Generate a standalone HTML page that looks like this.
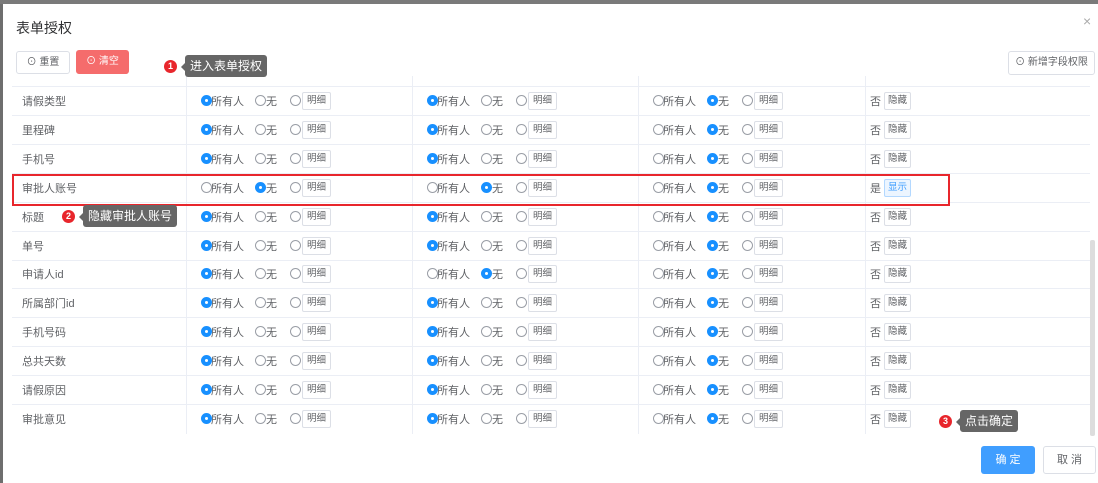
<!DOCTYPE html><html><head><meta charset="utf-8"><style>
*{box-sizing:border-box;margin:0;padding:0}
body{width:1098px;height:483px;overflow:hidden;background:#6e6e6e;font-family:"Liberation Sans","Noto Sans CJK SC",sans-serif;font-size:11px;color:#606266;position:relative}
.modal{position:absolute;left:3px;top:4px;width:1095px;height:479px;background:#fff}
.a{position:absolute}
.row{position:absolute;left:12px;width:1078px;height:29px;border-bottom:1px solid #ebeef5}
.vl{position:absolute;top:0;bottom:0;width:1px;background:#ebeef5}
.lab{position:absolute;left:10px;top:9px;font-size:11px;line-height:13px;color:#606266}
.g{position:absolute;top:0;height:29px;width:226px}
.r{position:absolute;top:8px;width:11px;height:11px;border:1px solid #9a9ea6;border-radius:50%;background:#fff}
.r.on{border-color:#1890ff;background:#1890ff}
.r.on:after{content:"";position:absolute;left:3px;top:3px;width:3px;height:3px;border-radius:50%;background:#fff}
.t{position:absolute;top:9px;font-size:11px;line-height:13px;color:#606266}
.b{position:absolute;top:5px;height:18px;border:1px solid #dcdfe6;border-radius:2px;font-size:9.5px;color:#606266;line-height:16px;text-align:center;background:#fff}
.tip{position:absolute;background:#666;color:#fff;font-size:12px;border-radius:3px;line-height:22px;padding:0 5px}
.tip:before{content:"";position:absolute;left:-4px;top:8px;border:4px solid transparent;border-left:0;border-right-color:#666}
.dot{position:absolute;width:13px;height:13px;border-radius:50%;background:#e8262c;color:#fff;font-size:9px;text-align:center;line-height:13px;font-weight:bold}
</style></head><body>
<div class="a" style="left:0;top:0;width:1098px;height:4px;background:#7a7a7a"></div>
<div class="modal">
<div class="a" style="left:13px;top:15px;font-size:14px;line-height:18px;color:#303133">表单授权</div>
<div class="a" style="left:1080px;top:9px;font-size:14px;color:#aaa">×</div>
<div class="a" style="left:13px;top:47px;width:54px;height:23px;border:1px solid #dcdfe6;border-radius:3px;font-size:10px;line-height:21px;text-align:center;color:#606266">⊙ 重置</div>
<div class="a" style="left:73px;top:46px;width:53px;height:24px;background:#f56c6c;border-radius:3px;font-size:10px;line-height:24px;text-align:center;color:#fff">⊙ 清空</div>
<div class="a" style="left:1005px;top:47px;width:87px;height:24px;border:1px solid #dcdfe6;border-radius:3px;font-size:10px;line-height:22px;text-align:center;color:#606266">⊙ 新增字段权限</div>
<div class="a" style="left:9px;top:72px;width:1078px;height:11px;border-bottom:1px solid #ebeef5"><div class="vl" style="left:174px"></div><div class="vl" style="left:400px"></div><div class="vl" style="left:626px"></div><div class="vl" style="left:853px"></div></div>
<div class="a" style="left:1087px;top:236px;width:5px;height:196px;background:#ddd;border-radius:2px"></div>
<div class="a" style="left:978px;top:442px;width:54px;height:28px;background:#409eff;border-radius:3px;color:#fff;font-size:11px;line-height:28px;text-align:center">确 定</div>
<div class="a" style="left:1040px;top:442px;width:53px;height:28px;border:1px solid #dcdfe6;border-radius:3px;color:#606266;font-size:11px;line-height:26px;text-align:center">取 消</div>
</div>
<div style="position:absolute;left:0;top:4px">
<div class="row" style="top:83px"><div class="vl" style="left:174px"></div><div class="vl" style="left:400px"></div><div class="vl" style="left:626px"></div><div class="vl" style="left:853px"></div><div class="lab">请假类型</div>
<div class="g" style="left:174px"><span class="r on" style="left:15px"></span><span class="t" style="left:25px">所有人</span><span class="r" style="left:69px"></span><span class="t" style="left:80px">无</span><span class="r" style="left:104px"></span><span class="b" style="left:116px;width:29px">明细</span></div>
<div class="g" style="left:400px"><span class="r on" style="left:15px"></span><span class="t" style="left:25px">所有人</span><span class="r" style="left:69px"></span><span class="t" style="left:80px">无</span><span class="r" style="left:104px"></span><span class="b" style="left:116px;width:29px">明细</span></div>
<div class="g" style="left:626px"><span class="r" style="left:15px"></span><span class="t" style="left:25px">所有人</span><span class="r on" style="left:69px"></span><span class="t" style="left:80px">无</span><span class="r" style="left:104px"></span><span class="b" style="left:116px;width:29px">明细</span></div>
<div class="g" style="left:853px"><span class="t" style="left:5px">否</span><span class="b" style="left:19px;width:27px">隐藏</span></div></div>
<div class="row" style="top:112px"><div class="vl" style="left:174px"></div><div class="vl" style="left:400px"></div><div class="vl" style="left:626px"></div><div class="vl" style="left:853px"></div><div class="lab">里程碑</div>
<div class="g" style="left:174px"><span class="r on" style="left:15px"></span><span class="t" style="left:25px">所有人</span><span class="r" style="left:69px"></span><span class="t" style="left:80px">无</span><span class="r" style="left:104px"></span><span class="b" style="left:116px;width:29px">明细</span></div>
<div class="g" style="left:400px"><span class="r on" style="left:15px"></span><span class="t" style="left:25px">所有人</span><span class="r" style="left:69px"></span><span class="t" style="left:80px">无</span><span class="r" style="left:104px"></span><span class="b" style="left:116px;width:29px">明细</span></div>
<div class="g" style="left:626px"><span class="r" style="left:15px"></span><span class="t" style="left:25px">所有人</span><span class="r on" style="left:69px"></span><span class="t" style="left:80px">无</span><span class="r" style="left:104px"></span><span class="b" style="left:116px;width:29px">明细</span></div>
<div class="g" style="left:853px"><span class="t" style="left:5px">否</span><span class="b" style="left:19px;width:27px">隐藏</span></div></div>
<div class="row" style="top:141px"><div class="vl" style="left:174px"></div><div class="vl" style="left:400px"></div><div class="vl" style="left:626px"></div><div class="vl" style="left:853px"></div><div class="lab">手机号</div>
<div class="g" style="left:174px"><span class="r on" style="left:15px"></span><span class="t" style="left:25px">所有人</span><span class="r" style="left:69px"></span><span class="t" style="left:80px">无</span><span class="r" style="left:104px"></span><span class="b" style="left:116px;width:29px">明细</span></div>
<div class="g" style="left:400px"><span class="r on" style="left:15px"></span><span class="t" style="left:25px">所有人</span><span class="r" style="left:69px"></span><span class="t" style="left:80px">无</span><span class="r" style="left:104px"></span><span class="b" style="left:116px;width:29px">明细</span></div>
<div class="g" style="left:626px"><span class="r" style="left:15px"></span><span class="t" style="left:25px">所有人</span><span class="r on" style="left:69px"></span><span class="t" style="left:80px">无</span><span class="r" style="left:104px"></span><span class="b" style="left:116px;width:29px">明细</span></div>
<div class="g" style="left:853px"><span class="t" style="left:5px">否</span><span class="b" style="left:19px;width:27px">隐藏</span></div></div>
<div class="row" style="top:170px"><div class="vl" style="left:174px"></div><div class="vl" style="left:400px"></div><div class="vl" style="left:626px"></div><div class="vl" style="left:853px"></div><div class="lab">审批人账号</div>
<div class="g" style="left:174px"><span class="r" style="left:15px"></span><span class="t" style="left:25px">所有人</span><span class="r on" style="left:69px"></span><span class="t" style="left:80px">无</span><span class="r" style="left:104px"></span><span class="b" style="left:116px;width:29px">明细</span></div>
<div class="g" style="left:400px"><span class="r" style="left:15px"></span><span class="t" style="left:25px">所有人</span><span class="r on" style="left:69px"></span><span class="t" style="left:80px">无</span><span class="r" style="left:104px"></span><span class="b" style="left:116px;width:29px">明细</span></div>
<div class="g" style="left:626px"><span class="r" style="left:15px"></span><span class="t" style="left:25px">所有人</span><span class="r on" style="left:69px"></span><span class="t" style="left:80px">无</span><span class="r" style="left:104px"></span><span class="b" style="left:116px;width:29px">明细</span></div>
<div class="g" style="left:853px"><span class="t" style="left:5px">是</span><span class="b" style="left:19px;width:27px;background:#ecf5ff;border-color:#b3d8ff;color:#409eff">显示</span></div></div>
<div class="row" style="top:199px"><div class="vl" style="left:174px"></div><div class="vl" style="left:400px"></div><div class="vl" style="left:626px"></div><div class="vl" style="left:853px"></div><div class="lab">标题</div>
<div class="g" style="left:174px"><span class="r on" style="left:15px"></span><span class="t" style="left:25px">所有人</span><span class="r" style="left:69px"></span><span class="t" style="left:80px">无</span><span class="r" style="left:104px"></span><span class="b" style="left:116px;width:29px">明细</span></div>
<div class="g" style="left:400px"><span class="r on" style="left:15px"></span><span class="t" style="left:25px">所有人</span><span class="r" style="left:69px"></span><span class="t" style="left:80px">无</span><span class="r" style="left:104px"></span><span class="b" style="left:116px;width:29px">明细</span></div>
<div class="g" style="left:626px"><span class="r" style="left:15px"></span><span class="t" style="left:25px">所有人</span><span class="r on" style="left:69px"></span><span class="t" style="left:80px">无</span><span class="r" style="left:104px"></span><span class="b" style="left:116px;width:29px">明细</span></div>
<div class="g" style="left:853px"><span class="t" style="left:5px">否</span><span class="b" style="left:19px;width:27px">隐藏</span></div></div>
<div class="row" style="top:228px"><div class="vl" style="left:174px"></div><div class="vl" style="left:400px"></div><div class="vl" style="left:626px"></div><div class="vl" style="left:853px"></div><div class="lab">单号</div>
<div class="g" style="left:174px"><span class="r on" style="left:15px"></span><span class="t" style="left:25px">所有人</span><span class="r" style="left:69px"></span><span class="t" style="left:80px">无</span><span class="r" style="left:104px"></span><span class="b" style="left:116px;width:29px">明细</span></div>
<div class="g" style="left:400px"><span class="r on" style="left:15px"></span><span class="t" style="left:25px">所有人</span><span class="r" style="left:69px"></span><span class="t" style="left:80px">无</span><span class="r" style="left:104px"></span><span class="b" style="left:116px;width:29px">明细</span></div>
<div class="g" style="left:626px"><span class="r" style="left:15px"></span><span class="t" style="left:25px">所有人</span><span class="r on" style="left:69px"></span><span class="t" style="left:80px">无</span><span class="r" style="left:104px"></span><span class="b" style="left:116px;width:29px">明细</span></div>
<div class="g" style="left:853px"><span class="t" style="left:5px">否</span><span class="b" style="left:19px;width:27px">隐藏</span></div></div>
<div class="row" style="top:256px"><div class="vl" style="left:174px"></div><div class="vl" style="left:400px"></div><div class="vl" style="left:626px"></div><div class="vl" style="left:853px"></div><div class="lab">申请人id</div>
<div class="g" style="left:174px"><span class="r on" style="left:15px"></span><span class="t" style="left:25px">所有人</span><span class="r" style="left:69px"></span><span class="t" style="left:80px">无</span><span class="r" style="left:104px"></span><span class="b" style="left:116px;width:29px">明细</span></div>
<div class="g" style="left:400px"><span class="r" style="left:15px"></span><span class="t" style="left:25px">所有人</span><span class="r on" style="left:69px"></span><span class="t" style="left:80px">无</span><span class="r" style="left:104px"></span><span class="b" style="left:116px;width:29px">明细</span></div>
<div class="g" style="left:626px"><span class="r" style="left:15px"></span><span class="t" style="left:25px">所有人</span><span class="r on" style="left:69px"></span><span class="t" style="left:80px">无</span><span class="r" style="left:104px"></span><span class="b" style="left:116px;width:29px">明细</span></div>
<div class="g" style="left:853px"><span class="t" style="left:5px">否</span><span class="b" style="left:19px;width:27px">隐藏</span></div></div>
<div class="row" style="top:285px"><div class="vl" style="left:174px"></div><div class="vl" style="left:400px"></div><div class="vl" style="left:626px"></div><div class="vl" style="left:853px"></div><div class="lab">所属部门id</div>
<div class="g" style="left:174px"><span class="r on" style="left:15px"></span><span class="t" style="left:25px">所有人</span><span class="r" style="left:69px"></span><span class="t" style="left:80px">无</span><span class="r" style="left:104px"></span><span class="b" style="left:116px;width:29px">明细</span></div>
<div class="g" style="left:400px"><span class="r on" style="left:15px"></span><span class="t" style="left:25px">所有人</span><span class="r" style="left:69px"></span><span class="t" style="left:80px">无</span><span class="r" style="left:104px"></span><span class="b" style="left:116px;width:29px">明细</span></div>
<div class="g" style="left:626px"><span class="r" style="left:15px"></span><span class="t" style="left:25px">所有人</span><span class="r on" style="left:69px"></span><span class="t" style="left:80px">无</span><span class="r" style="left:104px"></span><span class="b" style="left:116px;width:29px">明细</span></div>
<div class="g" style="left:853px"><span class="t" style="left:5px">否</span><span class="b" style="left:19px;width:27px">隐藏</span></div></div>
<div class="row" style="top:314px"><div class="vl" style="left:174px"></div><div class="vl" style="left:400px"></div><div class="vl" style="left:626px"></div><div class="vl" style="left:853px"></div><div class="lab">手机号码</div>
<div class="g" style="left:174px"><span class="r on" style="left:15px"></span><span class="t" style="left:25px">所有人</span><span class="r" style="left:69px"></span><span class="t" style="left:80px">无</span><span class="r" style="left:104px"></span><span class="b" style="left:116px;width:29px">明细</span></div>
<div class="g" style="left:400px"><span class="r on" style="left:15px"></span><span class="t" style="left:25px">所有人</span><span class="r" style="left:69px"></span><span class="t" style="left:80px">无</span><span class="r" style="left:104px"></span><span class="b" style="left:116px;width:29px">明细</span></div>
<div class="g" style="left:626px"><span class="r" style="left:15px"></span><span class="t" style="left:25px">所有人</span><span class="r on" style="left:69px"></span><span class="t" style="left:80px">无</span><span class="r" style="left:104px"></span><span class="b" style="left:116px;width:29px">明细</span></div>
<div class="g" style="left:853px"><span class="t" style="left:5px">否</span><span class="b" style="left:19px;width:27px">隐藏</span></div></div>
<div class="row" style="top:343px"><div class="vl" style="left:174px"></div><div class="vl" style="left:400px"></div><div class="vl" style="left:626px"></div><div class="vl" style="left:853px"></div><div class="lab">总共天数</div>
<div class="g" style="left:174px"><span class="r on" style="left:15px"></span><span class="t" style="left:25px">所有人</span><span class="r" style="left:69px"></span><span class="t" style="left:80px">无</span><span class="r" style="left:104px"></span><span class="b" style="left:116px;width:29px">明细</span></div>
<div class="g" style="left:400px"><span class="r on" style="left:15px"></span><span class="t" style="left:25px">所有人</span><span class="r" style="left:69px"></span><span class="t" style="left:80px">无</span><span class="r" style="left:104px"></span><span class="b" style="left:116px;width:29px">明细</span></div>
<div class="g" style="left:626px"><span class="r" style="left:15px"></span><span class="t" style="left:25px">所有人</span><span class="r on" style="left:69px"></span><span class="t" style="left:80px">无</span><span class="r" style="left:104px"></span><span class="b" style="left:116px;width:29px">明细</span></div>
<div class="g" style="left:853px"><span class="t" style="left:5px">否</span><span class="b" style="left:19px;width:27px">隐藏</span></div></div>
<div class="row" style="top:372px"><div class="vl" style="left:174px"></div><div class="vl" style="left:400px"></div><div class="vl" style="left:626px"></div><div class="vl" style="left:853px"></div><div class="lab">请假原因</div>
<div class="g" style="left:174px"><span class="r on" style="left:15px"></span><span class="t" style="left:25px">所有人</span><span class="r" style="left:69px"></span><span class="t" style="left:80px">无</span><span class="r" style="left:104px"></span><span class="b" style="left:116px;width:29px">明细</span></div>
<div class="g" style="left:400px"><span class="r on" style="left:15px"></span><span class="t" style="left:25px">所有人</span><span class="r" style="left:69px"></span><span class="t" style="left:80px">无</span><span class="r" style="left:104px"></span><span class="b" style="left:116px;width:29px">明细</span></div>
<div class="g" style="left:626px"><span class="r" style="left:15px"></span><span class="t" style="left:25px">所有人</span><span class="r on" style="left:69px"></span><span class="t" style="left:80px">无</span><span class="r" style="left:104px"></span><span class="b" style="left:116px;width:29px">明细</span></div>
<div class="g" style="left:853px"><span class="t" style="left:5px">否</span><span class="b" style="left:19px;width:27px">隐藏</span></div></div>
<div class="row" style="top:401px;border-bottom:0"><div class="vl" style="left:174px"></div><div class="vl" style="left:400px"></div><div class="vl" style="left:626px"></div><div class="vl" style="left:853px"></div><div class="lab">审批意见</div>
<div class="g" style="left:174px"><span class="r on" style="left:15px"></span><span class="t" style="left:25px">所有人</span><span class="r" style="left:69px"></span><span class="t" style="left:80px">无</span><span class="r" style="left:104px"></span><span class="b" style="left:116px;width:29px">明细</span></div>
<div class="g" style="left:400px"><span class="r on" style="left:15px"></span><span class="t" style="left:25px">所有人</span><span class="r" style="left:69px"></span><span class="t" style="left:80px">无</span><span class="r" style="left:104px"></span><span class="b" style="left:116px;width:29px">明细</span></div>
<div class="g" style="left:626px"><span class="r" style="left:15px"></span><span class="t" style="left:25px">所有人</span><span class="r on" style="left:69px"></span><span class="t" style="left:80px">无</span><span class="r" style="left:104px"></span><span class="b" style="left:116px;width:29px">明细</span></div>
<div class="g" style="left:853px"><span class="t" style="left:5px">否</span><span class="b" style="left:19px;width:27px">隐藏</span></div></div>
</div>
<div class="a" style="left:12px;top:174px;width:938px;height:32px;border:2px solid #e8262c"></div>
<div class="dot" style="left:164px;top:60px">1</div>
<div class="tip" style="left:185px;top:55px">进入表单授权</div>
<div class="dot" style="left:62px;top:210px">2</div>
<div class="tip" style="left:83px;top:205px">隐藏审批人账号</div>
<div class="dot" style="left:939px;top:415px">3</div>
<div class="tip" style="left:960px;top:410px">点击确定</div>
</body></html>
